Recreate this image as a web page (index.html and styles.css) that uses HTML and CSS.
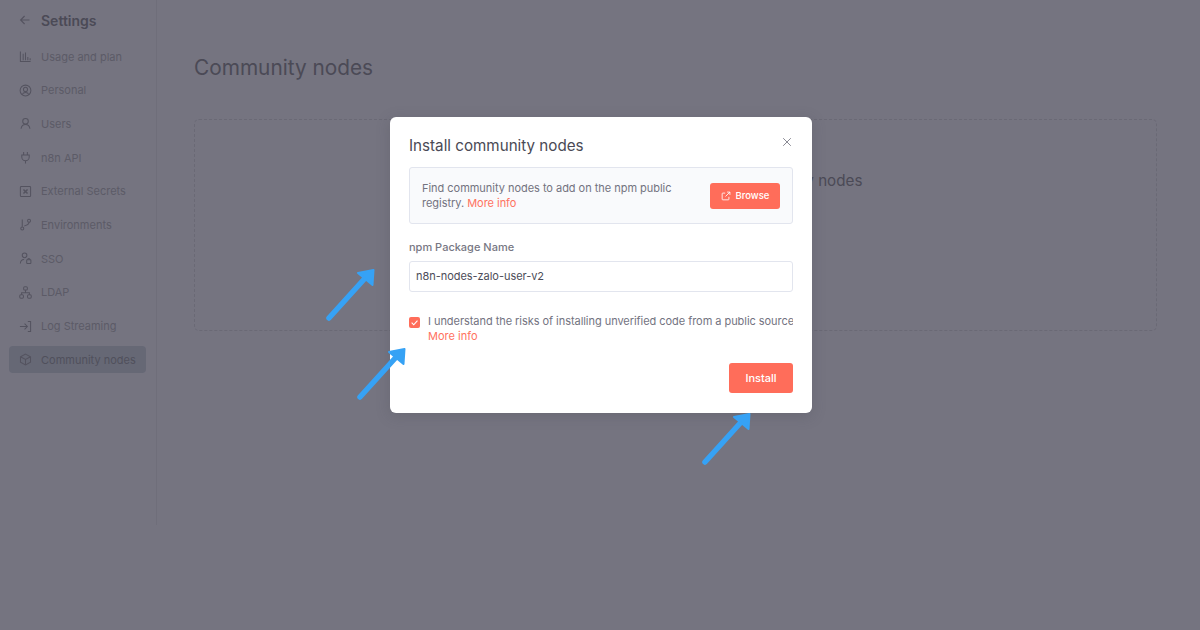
FILE: index.html

```html
<!DOCTYPE html>
<html lang="en">

<head>
    <meta charset="UTF-8">
    <title>Community nodes</title>
    <link rel="stylesheet" href="styles.css">
</head>

<body>
    <div class="app">
        <aside class="sidebar">
            <div class="side-head">
                <svg class="back" viewBox="0 0 12 12"><path d="M10.500 6H1.800M5.600 2 1.600 6l4 4" /></svg>
                <span>Settings</span>
            </div>
            <ul class="menu">
                <li>
                    <svg viewBox="0 0 14 14"><path d="M1.500 1.500v11h11M4.500 11V4M7 11V2.800M9.500 11V7.500M12 11V9" /></svg>
                    Usage and plan
                </li>
                <li>
                    <svg viewBox="0 0 14 14"><circle cx="7" cy="7" r="5.800" /><circle cx="7" cy="5.800" r="2.200" /><path d="M3.400 11.400c.6-1.500 2-2.300 3.600-2.300s3 .8 3.600 2.300" /></svg>
                    Personal
                </li>
                <li>
                    <svg viewBox="0 0 14 14"><circle cx="7" cy="4.600" r="3" /><path d="M2.200 12.600c.3-2.800 2.200-4.600 4.800-4.600s4.500 1.800 4.800 4.600" /></svg>
                    Users
                </li>
                <li>
                    <svg viewBox="0 0 14 14"><path d="M5 1v3.300M9 1v3.300M3 4.300h8v2.200a4 4 0 0 1-8 0zM7 10.500V13.500" /></svg>
                    n8n API
                </li>
                <li>
                    <svg viewBox="0 0 14 14"><rect x="1.500" y="1.500" width="11" height="11" rx="1" /><path d="m4.800 4.800 4.400 4.400M9.200 4.800 4.800 9.200" stroke-width="1.600" /></svg>
                    External Secrets
                </li>
                <li>
                    <svg viewBox="0 0 14 14"><circle cx="3.500" cy="11.200" r="1.600" /><circle cx="10.800" cy="3" r="1.600" /><path d="M3.500 1.500v8M10.800 4.600c0 2.800-3 3.400-5.200 4" /></svg>
                    Environments
                </li>
                <li>
                    <svg viewBox="0 0 14 14"><circle cx="6" cy="3.600" r="2.500" /><path d="M1.500 12.500c0-3 1.500-4.500 4-4.500" /><rect x="8.300" y="8.300" width="4.500" height="4.200" rx=".6" /><path d="M9.300 8.300c0-1.800 2.500-1.800 2.500 0" /></svg>
                    SSO
                </li>
                <li>
                    <svg viewBox="0 0 14 14"><rect x="5" y=".8" width="4" height="3.600" rx="1.200" /><rect x=".8" y="9.500" width="4" height="3.600" rx="1.200" /><rect x="9.200" y="9.500" width="4" height="3.600" rx="1.200" /><path d="M7 4.400v2.800M2.800 9.500V7.200h8.400v2.300" /></svg>
                    LDAP
                </li>
                <li>
                    <svg viewBox="0 0 14 14"><path d="M9.500 1.500h3v11h-3M1 7h8M6 4l3 3-3 3" /></svg>
                    Log Streaming
                </li>
                <li class="active">
                    <svg viewBox="0 0 14 14"><path d="M7 1.200 12.400 4v6L7 12.800 1.600 10V4zM1.600 4 7 7l5.400-3M7 7v5.800" /></svg>
                    Community nodes
                </li>
            </ul>
        </aside>
        <main class="content">
            <h1>Community nodes</h1>
            <div class="empty">
                <p>Supercharge your workflows with community nodes</p>
            </div>
        </main>
    </div>

    <div class="modal">
        <div class="modal-head">
            <h2>Install community nodes</h2>
            <svg class="close" viewBox="0 0 10 10"><path d="m1.200 1.200 7.600 7.600M8.800 1.200 1.200 8.800" /></svg>
        </div>
        <div class="info-box">
            <p>Find community nodes to add on the npm public registry. <a>More info</a></p>
            <button class="btn-browse">
                <svg viewBox="0 0 12 12"><path d="M9.500 7v2.800a.8.8 0 0 1-.8.8H2.200a.8.8 0 0 1-.8-.8V3.300a.8.8 0 0 1 .8-.8H5M7.300 1.300h3.400v3.400M10.700 1.300 5.400 6.600" /></svg>
                Browse
            </button>
        </div>
        <label class="field-label">npm Package Name</label>
        <div class="field">n8n-nodes-zalo-user-v2</div>
        <div class="check-row">
            <span class="check">
                <svg viewBox="0 0 10 10"><path d="m2.400 5.200 1.900 1.900 3.400-3.800" /></svg>
            </span>
            <div class="check-text">
                <span class="nowrap">I understand the risks of installing unverified code from a public source.</span>
                <a>More info</a>
            </div>
        </div>
        <div class="modal-foot">
            <button class="btn-install">Install</button>
        </div>
    </div>

    <svg class="arrow arrow-a" viewBox="0 0 60 60"><path d="M9 56 47 14" /><path class="tip" d="M38 11 53.500 8 52.500 23z" /></svg>
    <svg class="arrow arrow-b" viewBox="0 0 60 60"><path d="M9 56 47 14" /><path class="tip" d="M38 11 53.500 8 52.500 23z" /></svg>
    <svg class="arrow arrow-c" viewBox="0 0 60 60"><path d="M9 56 47 14" /><path class="tip" d="M38 11 53.500 8 52.500 23z" /></svg>
</body>

</html>
```

FILE: styles.css

```css
* {
    margin: 0;
    padding: 0;
    box-sizing: border-box;
    list-style: none;
}

body {
    width: 1200px;
    height: 630px;
    overflow: hidden;
    background-color: #757480;
    font-family: Inter, "Liberation Sans", sans-serif;
    color: #4a4a55;
    position: relative;
}

.app {
    display: flex;
    height: 525px;
}

.sidebar {
    width: 157px;
    padding: 11px 10px 0 9px;
    border-right: 1px solid #6f6e7a;
    flex-shrink: 0;
}

.side-head {
    display: flex;
    align-items: center;
    gap: 10px;
    height: 18px;
    padding-left: 10px;
    font-size: 14px;
    font-weight: 600;
    color: #4b4a56;
}

.back {
    width: 12px;
    height: 12px;
    fill: none;
    stroke: #54535f;
    stroke-width: 1.100;
}

.menu {
    margin-top: 14px;
}

.menu li {
    display: flex;
    align-items: center;
    gap: 9px;
    height: 27px;
    margin-bottom: 6.700px;
    padding-left: 10px;
    border-radius: 4px;
    font-size: 11px;
    color: #5c5b67;
}

.menu li svg {
    width: 13px;
    height: 13px;
    flex-shrink: 0;
    fill: none;
    stroke: #54535f;
    stroke-width: 1.100;
}

.menu li.active {
    background-color: #666875;
    color: #50505c;
}

.content {
    flex: 1;
    padding: 54px 43px 0 37px;
}

.content h1 {
    font-size: 20.800px;
    font-weight: 400;
    line-height: 28px;
    color: #4b4a56;
}

.empty {
    height: 212px;
    margin-top: 37px;
    border: 1px dashed #6a6975;
    border-radius: 5px;
    padding-top: 51px;
    text-align: center;
}

.empty p {
    font-size: 15.200px;
    line-height: 20px;
    color: #4b4a56;
}

/* 弹窗 */
.modal {
    position: absolute;
    left: 390px;
    top: 117px;
    width: 422px;
    height: 296px;
    padding: 19px 19px 0;
    background-color: #fff;
    border-radius: 6px;
    box-shadow: 0 3px 14px rgba(70, 70, 80, .25);
}

.modal-head {
    display: flex;
    justify-content: space-between;
    height: 31px;
}

.modal-head h2 {
    font-size: 15.200px;
    font-weight: 400;
    line-height: 19px;
    color: #4a4a55;
}

.close {
    width: 10px;
    height: 10px;
    margin: 1px 1px 0 0;
    fill: none;
    stroke: #8a8a94;
    stroke-width: 1;
}

.info-box {
    display: flex;
    align-items: center;
    justify-content: space-between;
    height: 57px;
    padding: 0 12px;
    background-color: #f9fafc;
    border: 1px solid #e2e5ee;
    border-radius: 3px;
}

.info-box p {
    width: 270px;
    font-size: 11px;
    line-height: 15px;
    letter-spacing: -.03px;
    color: #73737f;
}

a {
    color: #ff7260;
}

.btn-browse {
    display: flex;
    align-items: center;
    justify-content: center;
    gap: 5px;
    width: 70px;
    height: 26px;
    border: 0;
    border-radius: 3px;
    background-color: #ff6d5a;
    color: #fff;
    font-family: inherit;
    font-size: 9.500px;
    font-weight: 500;
}

.btn-browse svg {
    width: 10px;
    height: 10px;
    fill: none;
    stroke: #fff;
    stroke-width: 1;
}

.field-label {
    display: block;
    margin-top: 16px;
    font-size: 11px;
    font-weight: 500;
    line-height: 14px;
    color: #777783;
}

.field {
    height: 31px;
    margin-top: 7px;
    padding-left: 6px;
    border: 1px solid #e2e5ee;
    border-radius: 3px;
    font-size: 11px;
    line-height: 29px;
    letter-spacing: -.04px;
    color: #4c4c58;
}

.check-row {
    display: flex;
    gap: 8px;
    width: 384px;
    margin-top: 22px;
    overflow: hidden;
}

.check {
    display: flex;
    width: 11px;
    height: 11px;
    margin-top: 3px;
    border-radius: 2px;
    background-color: #ff6d5a;
    flex-shrink: 0;
}

.check svg {
    width: 11px;
    height: 11px;
    fill: none;
    stroke: #fff;
    stroke-width: 1;
}

.check-text {
    font-size: 11px;
    line-height: 15px;
    color: #73737f;
}

.nowrap {
    display: block;
    white-space: nowrap;
    letter-spacing: -.05px;
}

.modal-foot {
    display: flex;
    justify-content: flex-end;
    margin-top: 19px;
}

.btn-install {
    width: 64px;
    height: 30px;
    border: 0;
    border-radius: 3px;
    background-color: #ff6d5a;
    color: #fff;
    font-family: inherit;
    font-size: 11px;
    font-weight: 500;
}

/* 标注箭头 */
.arrow {
    position: absolute;
    width: 60px;
    height: 60px;
    fill: none;
    stroke: #36a2f5;
    stroke-width: 5.500;
    stroke-linecap: round;
}

.arrow .tip {
    fill: #36a2f5;
    stroke: #36a2f5;
    stroke-width: 2;
    stroke-linejoin: round;
}

.arrow-a {
    left: 320px;
    top: 262px;
}

.arrow-b {
    left: 351px;
    top: 341px;
}

.arrow-c {
    left: 696px;
    top: 406px;
}
```
